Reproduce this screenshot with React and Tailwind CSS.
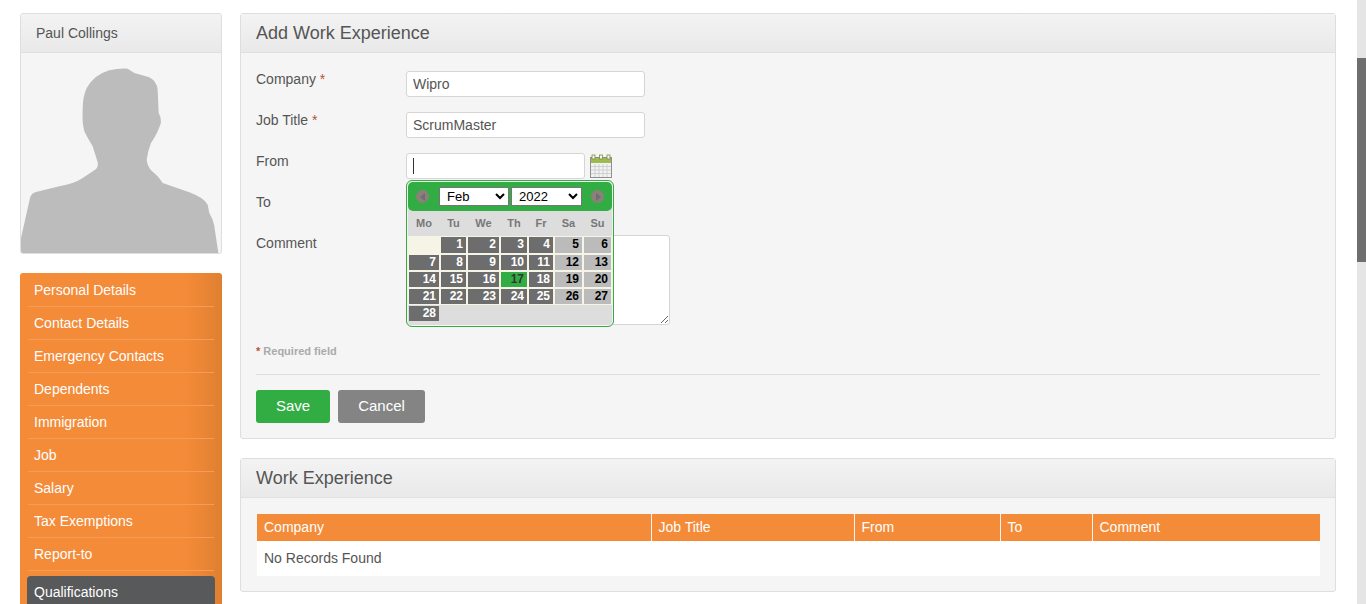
const navItems = [
  "Personal Details",
  "Contact Details",
  "Emergency Contacts",
  "Dependents",
  "Immigration",
  "Job",
  "Salary",
  "Tax Exemptions",
  "Report-to",
];

const calRows = [
  [null, 1, 2, 3, 4, 5, 6],
  [7, 8, 9, 10, 11, 12, 13],
  [14, 15, 16, 17, 18, 19, 20],
  [21, 22, 23, 24, 25, 26, 27],
];

const dayNames = ["Mo", "Tu", "We", "Th", "Fr", "Sa", "Su"];

const Panel = ({ title, titleClass, children, className }) => (
  <div className={`rounded-[3px] border border-[#dedede] bg-[#f5f5f5] ${className}`}>
    <div className="flex h-[39px] items-center border-b border-[#e0e0e0] bg-gradient-to-b from-[#f3f3f3] to-[#e9e9e9] px-[15px]">
      <span className={titleClass}>{title}</span>
    </div>
    {children}
  </div>
);

const Silhouette = () => (
  <svg viewBox="65 160 597 600" className="block h-[200px] w-[199px]">
    <path
      fill="#bcbcbc"
      d="M65 760 L65 715 L92 595 Q96 580 110 577 L180 560 Q225 552 250 535 L285 512 Q298 504 295 488 L280 440 Q262 410 255 395 Q248 370 250 330 Q250 290 262 265 Q285 225 330 212 Q360 205 385 207 L405 220 L450 233 Q472 245 475 270 L478 340 Q487 355 484 372 Q475 400 455 430 Q445 455 442 480 Q444 500 458 515 Q475 527 490 550 L570 578 Q615 595 625 615 L630 640 Q642 660 645 680 L657 760 Z"
    />
  </svg>
);

const CalendarIcon = () => (
  <svg viewBox="0 0 22 24" className="ml-[5px] h-[24px] w-[22px] shrink-0">
    <rect x="0.5" y="3.5" width="21" height="20" fill="#f2f2f2" stroke="#8f8f8f" />
    <rect x="1" y="4" width="20" height="5" fill="#9dbb4f" />
    <rect x="2" y="1" width="3" height="4" fill="#f4f4f4" stroke="#7c8f45" strokeWidth="0.8" />
    <rect x="9.5" y="1" width="3" height="4" fill="#f4f4f4" stroke="#7c8f45" strokeWidth="0.8" />
    <rect x="17" y="1" width="3" height="4" fill="#f4f4f4" stroke="#7c8f45" strokeWidth="0.8" />
    <g stroke="#d0d0d0" strokeWidth="1">
      <path d="M5 10v13M9 10v13M13 10v13M17 10v13" />
      <path d="M1 12.5h20M1 16h20M1 19.5h20" />
    </g>
  </svg>
);

const NavArrow = ({ dir }) => (
  <div className="flex size-[13px] items-center justify-center rounded-full bg-[#8b807a]">
    <svg viewBox="0 0 6 8" className="h-[8px] w-[6px]">
      <path fill="#6f6f6f" d={dir === "left" ? "M5 0v8L0 4z" : "M1 0v8l5-4z"} />
    </svg>
  </div>
);

const DayCell = ({ day, col }) => {
  if (day === null) return <div className="bg-[#f6f3e7]" />;
  const weekend = col >= 5;
  const today = day === 17;
  const tone = today
    ? "bg-[#32ad43] text-[#333]"
    : weekend
      ? "bg-[#bbbbbb] text-black"
      : "bg-[#6d6d6d] text-white";
  return (
    <div className={`pr-[3px] text-right text-[12px] leading-[15px] font-bold ${tone}`}>
      {day}
    </div>
  );
};

const DatePicker = () => (
  <div className="absolute top-[27px] left-0 z-10 w-[208px] overflow-hidden rounded-[6px] border border-[#32ad43] bg-[#dddddd] shadow-[inset_0_0_0_1px_#f5f5f5]">
    <div className="mx-px mt-px flex h-[29px] items-center rounded-[5px] bg-[#32ad43] pr-[8px] pl-[8px]">
      <NavArrow dir="left" />
      <div className="ml-[10px] flex flex-1 gap-[2px]">
        <select
          defaultValue="Feb"
          className="h-[19px] w-[70px] border border-[#767676] bg-white pl-[3px] text-[13px] leading-none text-black"
        >
          <option>Feb</option>
        </select>
        <select
          defaultValue="2022"
          className="h-[19px] w-[71px] border border-[#767676] bg-white pl-[3px] text-[13px] leading-none text-black"
        >
          <option>2022</option>
        </select>
      </div>
      <NavArrow dir="right" />
    </div>
    <div className="grid h-[25px] grid-cols-[30px_25px_31px_26px_24px_27px_27px] items-center gap-x-[2px] pl-[2px] text-center text-[11px] font-bold text-[#777]">
      {dayNames.map((d) => (
        <div key={d}>{d}</div>
      ))}
    </div>
    <div className="bg-[#f6f3e7] py-px pl-[2px]">
      <div className="grid grid-cols-[30px_25px_31px_26px_24px_27px_27px] grid-rows-[16px_15px_15px_15px] gap-[2px]">
        {calRows.flatMap((row, r) =>
          row.map((day, c) => <DayCell key={`${r}-${c}`} day={day} col={c} />),
        )}
      </div>
    </div>
    <div className="h-[21px] pt-[1px] pl-[2px]">
      <div className="w-[30px] bg-[#6d6d6d] pr-[3px] text-right text-[12px] leading-[15px] font-bold text-white">
        28
      </div>
    </div>
  </div>
);

const FormRow = ({ label, required, children }) => (
  <div className="mb-[15px] flex">
    <label className="w-[150px] shrink-0 text-[14px] leading-[16px] text-[#555]">
      {label}
      {required && <span className="text-[#b5533c]"> *</span>}
    </label>
    <div className="relative -mt-[-0px] flex items-center">{children}</div>
  </div>
);

const inputClass =
  "h-[26px] rounded-[3px] border border-[#d5d5d5] bg-white px-[6px] text-[14px] text-[#555] outline-none";

const columns = [
  { name: "Company", width: "w-[394px]" },
  { name: "Job Title", width: "w-[203px]" },
  { name: "From", width: "w-[146px]" },
  { name: "To", width: "w-[92px]" },
  { name: "Comment", width: "" },
];

export default function App() {
  return (
    <div className="flex h-screen overflow-hidden bg-white font-['Liberation_Sans',Arial,sans-serif]">
      <div className="flex min-w-0 flex-1 items-start gap-[18px] pt-[13px] pl-[20px]">
        <aside className="w-[202px] shrink-0">
          <div className="overflow-hidden rounded-[3px] border border-[#dedede] bg-[#f5f5f5]">
            <div className="flex h-[39px] items-center border-b border-[#e0e0e0] bg-gradient-to-b from-[#f3f3f3] to-[#e9e9e9] pl-[15px] text-[14px] text-[#555]">
              Paul Collings
            </div>
            <Silhouette />
          </div>
          <nav className="mt-[19px] rounded-t-[3px] bg-[linear-gradient(90deg,#f48b39_82%,#df8030_100%)] px-[7px] pt-px pb-[40px]">
            {navItems.map((item) => (
              <div
                key={item}
                className="mx-px flex h-[33px] items-center border-b border-[#f79c58] pl-[6px] text-[14px] text-white"
              >
                {item}
              </div>
            ))}
            <div className="mt-[5px] flex h-[33px] items-center rounded-[4px] bg-[#58595b] pl-[7px] text-[14px] text-white">
              Qualifications
            </div>
          </nav>
        </aside>

        <main className="w-[1096px] shrink-0">
          <Panel title="Add Work Experience" titleClass="text-[18px] text-[#555]" className="h-[426px]">
            <form className="px-[15px] pt-[18px]">
              <FormRow label="Company" required>
                <input className={`${inputClass} w-[239px]`} defaultValue="Wipro" />
              </FormRow>
              <FormRow label="Job Title" required>
                <input className={`${inputClass} w-[239px]`} defaultValue="ScrumMaster" />
              </FormRow>
              <FormRow label="From">
                <div className="relative flex items-center">
                  <input className={`${inputClass} w-[179px]`} />
                  <div className="absolute top-[5px] left-[7px] h-[16px] w-px bg-[#333]" />
                  <CalendarIcon />
                  <DatePicker />
                </div>
              </FormRow>
              <FormRow label="To">
                <input className={`${inputClass} w-[179px]`} />
              </FormRow>
              <FormRow label="Comment">
                <textarea className="h-[90px] w-[264px] rounded-[3px] border border-[#d5d5d5] bg-white" />
              </FormRow>
              <p className="mt-[20px] text-[11px] leading-[13px] font-bold text-[#aaa]">
                <span className="text-[#b5533c]">*</span> Required field
              </p>
              <div className="mt-[16px] border-t border-[#dedede]" />
              <div className="mt-[15px] flex gap-[8px]">
                <button type="button" className="h-[33px] w-[74px] rounded-[3px] bg-[#32ad43] text-[15px] text-white">
                  Save
                </button>
                <button type="button" className="h-[33px] w-[87px] rounded-[3px] bg-[#848484] text-[15px] text-white">
                  Cancel
                </button>
              </div>
            </form>
          </Panel>

          <Panel title="Work Experience" titleClass="text-[18px] text-[#555]" className="mt-[19px] h-[134px]">
            <div className="px-[16px] pt-[16px]">
              <table className="w-[1063px] table-fixed text-[14px]">
                <thead>
                  <tr className="h-[27px] bg-[#f48b39] text-left text-white">
                    {columns.map((col) => (
                      <th
                        key={col.name}
                        className={`border-r border-[#f5f5f5] pl-[7px] font-normal last:border-r-0 ${col.width}`}
                      >
                        {col.name}
                      </th>
                    ))}
                  </tr>
                </thead>
                <tbody>
                  <tr className="h-[35px] bg-white text-[#555]">
                    <td colSpan={5} className="pl-[7px]">
                      No Records Found
                    </td>
                  </tr>
                </tbody>
              </table>
            </div>
          </Panel>
        </main>
      </div>

      <div className="relative w-[9px] shrink-0 bg-[#e5e5e5]">
        <div className="absolute top-[58px] left-0 h-[204px] w-full bg-[#6e6e6e]" />
      </div>
    </div>
  );
}
